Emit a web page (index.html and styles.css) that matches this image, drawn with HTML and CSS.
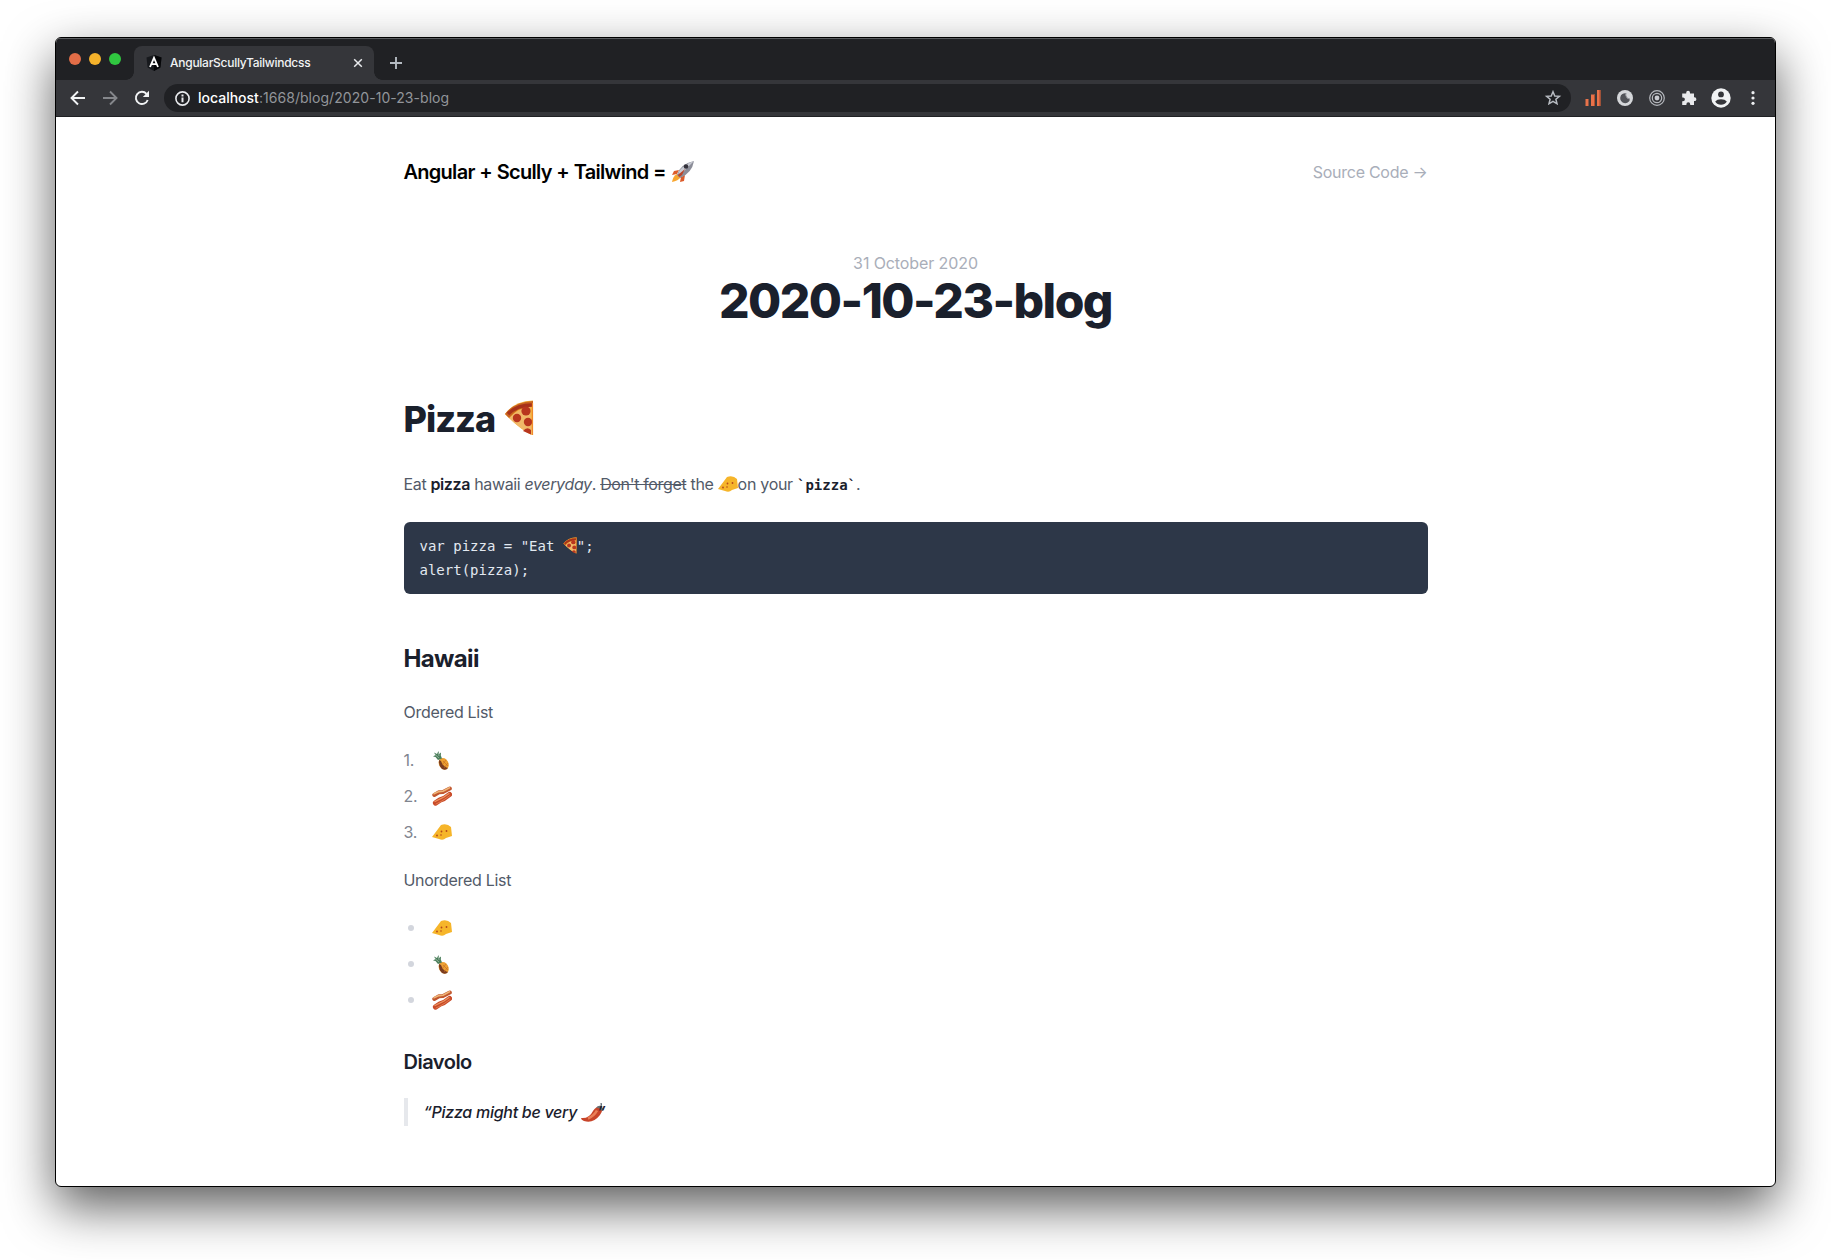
FILE: index.html
```html
<!DOCTYPE html>
<html lang="en">
<head>
<meta charset="utf-8">
<title>AngularScullyTailwindcss</title>
<link rel="stylesheet" href="styles.css">
</head>
<body>
<svg class="sprite" aria-hidden="true">
  <symbol id="pizza" viewBox="0 0 30 36">
    <path d="M1 14Q10 1 29 .5L28 35Q18 31 1 14Z" fill="#f5b13c"/>
    <path d="M5 18Q12 10 26 6L28 34Q16 29 5 18Z" fill="#f0b868"/>
    <path d="M1 14Q10 2 29 1V6Q14 7 5 18Z" fill="#c9651f"/>
    <path d="M4 14Q13 5 28 5" fill="none" stroke="#a8321a" stroke-width="3.500"/>
    <circle cx="13" cy="18" r="4.2" fill="#b8361e"/><circle cx="22" cy="11" r="4.6" fill="#b8361e"/><circle cx="24" cy="22" r="4.2" fill="#b8361e"/><path d="M19 31q4-5 8-1v4.500z" fill="#b8361e"/>
    <path d="M28.500 3V35" stroke="#ef8a2b" stroke-width="1.200"/>
  </symbol>
  <symbol id="cheese" viewBox="0 0 20 16">
    <path d="M0 13L9 1Q15-1 19 3L20 12L14 14Q11 17 7 15Z" fill="#f6b52a"/>
    <circle cx="9.500" cy="7.500" r=".9" fill="#b5481a"/><circle cx="14.500" cy="7" r=".9" fill="#b5481a"/><circle cx="5" cy="11.500" r=".9" fill="#b5481a"/><circle cx="9" cy="11" r=".8" fill="#b5481a"/>
  </symbol>
  <symbol id="pineapple" viewBox="0 0 16 19">
    <ellipse cx="10.700" cy="12.800" rx="4.700" ry="6.200" transform="rotate(-28 10.700 12.800)" fill="#eda033"/>
    <path d="M6.200 9Q5 14 9 18Q13 20 15 17Q10 16 8 10Z" fill="#7a3c20"/>
    <path d="M10 10l5 5M13 9l-4 5M15 12l-4 5" stroke="#c46a20" stroke-width=".6"/>
    <path d="M5 9L2.500 6L0 5.500L2.500 4L1 1.500L4 3L5.500 0L6 3L8 1.500L7.800 4.500L9 7.500Z" fill="#4c7f5c"/>
    <path d="M2 3.500L6 7M5.500 2L6 5" stroke="#b9cfc0" stroke-width=".6"/>
  </symbol>
  <symbol id="bacon" viewBox="0 0 20 20">
    <g fill="none" stroke-linecap="round" stroke-linejoin="round">
      <path d="M2.300 9L7 6.300L11 6L17.800 2.500" stroke="#c0562e" stroke-width="4"/>
      <path d="M2 7.800L7 5.600L11 5.200L17.500 1.800" stroke="#eeb375" stroke-width="1.600"/>
      <path d="M3.500 17L8 14L12 12.500L17.500 8.500" stroke="#c94a28" stroke-width="5.200"/>
      <path d="M3 15.500L8 13L12 11L17 7.500" stroke="#eb9560" stroke-width="1.300"/>
      <path d="M4 18L9 15.500L13 13L18 9.500" stroke="#e58a5a" stroke-width=".8"/>
    </g>
  </symbol>
  <symbol id="rocket" viewBox="0 0 22 21">
    <path d="M7 9L2 10L0 14L5 13ZM13 14L12 20L8 21L9 16Z" fill="#dc5b2a"/>
    <path d="M5 13Q1 15 0 21Q6 20 9 16Z" fill="#f8a62e"/>
    <path d="M5 14Q8 3 22 0Q20 12 8 17Z" fill="#8b8d98"/>
    <path d="M6 13Q9 4 22 0L11 11Z" fill="#c9cbd3"/>
    <circle cx="14" cy="5.500" r="2.300" fill="#34323b"/>
    <path d="M6 14L13 8L10 14L7 16Z" fill="#bd4428"/>
  </symbol>
  <symbol id="chili" viewBox="0 0 24 19">
    <path d="M0 15Q8 16 12 8Q16 2 20 4Q23 6 19 12Q12 21 3 18Q0 17 0 15Z" fill="#c8452a"/>
    <path d="M7 15.500Q13 13 16 7.500" stroke="#e98058" stroke-width="2.600" fill="none"/>
    <path d="M15 5Q18 1 21 4T21 8Q18 4 15 5Z" fill="#65717a"/>
    <path d="M19 4Q21 3 20 0" stroke="#65717a" stroke-width="1.400" fill="none"/>
  </symbol>
</svg>
<div class="window">
  <div class="tabstrip">
    <div class="lights"><i class="red"></i><i class="amber"></i><i class="green"></i></div>
    <div class="tab">
      <svg class="favicon" viewBox="0 0 16 16"><path d="M8 0L15.500 2.600L14.400 12.400L8 16L1.600 12.400L.5 2.600Z" fill="#17191d"/><path d="M8 0L15.500 2.600L14.400 12.400L8 16Z" fill="#050608"/><path d="M4 12L8 2.800L12 12M5.600 9.200H10.400" fill="none" stroke="#fff" stroke-width="1.800"/></svg>
      <span class="tab-title">AngularScullyTailwindcss</span>
      <svg class="close" viewBox="0 0 8 8"><path d="M.2.2L7.800 7.800M7.800.2L.2 7.800" stroke="#e8eaed" stroke-width="1.500"/></svg>
    </div>
    <svg class="plus" viewBox="0 0 12 12"><path d="M6 0V12M0 6H12" stroke="#b5bbc2" stroke-width="1.900"/></svg>
  </div>
  <div class="toolbar">
    <svg class="nav" viewBox="0 0 16 16"><path d="M15 8H2M8 1.500L1.500 8L8 14.500" fill="none" stroke="#f1f3f4" stroke-width="1.900"/></svg>
    <svg class="nav" viewBox="0 0 16 16"><path d="M1 8H14M8 1.500L14.500 8L8 14.500" fill="none" stroke="#85878b" stroke-width="1.900"/></svg>
    <svg class="nav" viewBox="0 0 16 16"><path d="M13.700 10A6.100 6.100 0 1 1 12.500 3.800" fill="none" stroke="#f1f3f4" stroke-width="1.900"/><path d="M15 .8V7H8.800Z" fill="#f1f3f4"/></svg>
    <div class="omnibox">
      <svg class="info" viewBox="0 0 15 15"><circle cx="7.500" cy="7.500" r="6.600" fill="none" stroke="#e8eaed" stroke-width="1.600"/><path d="M7.500 6.500V11.300M7.500 3.500V5.400" stroke="#e8eaed" stroke-width="2"/></svg>
      <span class="url"><b>localhost</b>:1668/blog/2020-10-23-blog</span>
      <svg class="star" viewBox="0 0 16 16"><path d="M8 1.700L9.800 6L14.400 6.300L10.900 9.300L12 13.800L8 11.400L4 13.800L5.100 9.300L1.600 6.300L6.200 6Z" fill="none" stroke="#b6bac0" stroke-width="1.500"/></svg>
    </div>
    <div class="extensions">
      <svg viewBox="0 0 16 16"><path d="M.5 9h3v7h-3zM6 4.500h4V16H6zM12 0h3.500v16H12z" fill="#e8724a"/><path d="M9.500 5v11M14.900 0v16" stroke="#b34e2d" stroke-width="1"/></svg>
      <svg viewBox="0 0 16 16"><circle cx="8" cy="8" r="8" fill="#d5d7da"/><path d="M9 3.200A5 5 0 1 0 13 9.500A4.600 4.600 0 0 1 9 3.200Z" fill="#515358"/><path d="M9 3A4.500 4.500 0 0 0 13 9" fill="none" stroke="#93959a" stroke-width="1"/></svg>
      <svg viewBox="0 0 16 16"><g fill="none" stroke="#b5b8bd" stroke-width="1.200"><circle cx="8" cy="8" r="7.300"/><circle cx="8" cy="8" r="4.700"/></g><circle cx="8" cy="8" r="2.400" fill="#c8cacf"/></svg>
      <svg viewBox="0 0 16 16"><path d="M1.200 3.500H5.200V2.700a1.900 1.900 0 0 1 3.800 0v.8H13V7.300h.5a1.900 1.900 0 0 1 0 3.800H13V15H9.200V14.200a1.900 1.900 0 0 0-3.800 0V15H1.200V11.200H2a1.900 1.900 0 0 0 0-3.800H1.200Z" fill="#e9eaec"/></svg>
      <svg class="avatar" viewBox="0 0 20 20"><circle cx="10" cy="10" r="9.700" fill="#f1f3f4"/><circle cx="10" cy="6.400" r="2.900" fill="#35363a"/><path d="M4.200 13.500Q6 11.200 10 11.200T15.800 13.500Q13.800 16.700 10 16.700T4.200 13.500Z" fill="#35363a"/></svg>
      <svg class="dots" viewBox="0 0 4 14"><g fill="#eceef0"><circle cx="2" cy="1.700" r="1.600"/><circle cx="2" cy="7" r="1.600"/><circle cx="2" cy="12.300" r="1.600"/></g></svg>
    </div>
  </div>
  <main class="page">
    <header class="site-header">
      <div class="brand"><span class="brand-text">Angular + Scully + Tailwind =</span><svg class="rocket"><use href="#rocket"/></svg></div>
      <a class="source">Source Code →</a>
    </header>
    <div class="post-head">
      <time>31 October 2020</time>
      <h1><span>2020-10-23-blog</span></h1>
    </div>
    <article class="prose">
      <h1><span>Pizza</span><svg class="pizza-lg"><use href="#pizza"/></svg></h1>
      <p><span class="p1">Eat <strong>pizza</strong> hawaii <em>everyday</em>. <del>Don't forget</del> the </span><svg class="cheese"><use href="#cheese"/></svg><span class="p2">on your </span><code>`pizza`</code><span>.</span></p>
      <pre><span class="line">var pizza = "Eat <svg class="pizza-sm"><use href="#pizza"/></svg>";</span><span class="line">alert(pizza);</span></pre>
      <h2>Hawaii</h2>
      <p>Ordered List</p>
      <ol>
        <li><span>1.</span><svg class="pineapple"><use href="#pineapple"/></svg></li>
        <li><span>2.</span><svg class="bacon"><use href="#bacon"/></svg></li>
        <li><span>3.</span><svg class="cheese"><use href="#cheese"/></svg></li>
      </ol>
      <p>Unordered List</p>
      <ul>
        <li><i class="bullet"></i><svg class="cheese"><use href="#cheese"/></svg></li>
        <li><i class="bullet"></i><svg class="pineapple"><use href="#pineapple"/></svg></li>
        <li><i class="bullet"></i><svg class="bacon"><use href="#bacon"/></svg></li>
      </ul>
      <h3>Diavolo</h3>
      <blockquote><span>“Pizza might be very </span><svg class="chili"><use href="#chili"/></svg><span class="endquote">”</span></blockquote>
    </article>
  </main>
</div>
</body>
</html>
```
FILE: styles.css
```css
* { box-sizing: border-box; }
body {
  margin: 0;
  height: 1260px;
  padding: 37px 55px 0;
  overflow: hidden;
  background: #fff;
  font-family: Inter, "Liberation Sans", sans-serif;
}
svg { display: block; flex: none; overflow: visible; }
.sprite { position: absolute; width: 0; height: 0; }
h1, h2, h3, p, pre, ol, ul, blockquote { margin: 0; padding: 0; }

.window {
  width: 1721px;
  height: 1150px;
  border: 1px solid #000;
  border-radius: 6px;
  overflow: hidden;
  background: #fff;
  box-shadow: 0 20px 50px rgba(0, 0, 0, .64);
}
.tabstrip {
  height: 42px;
  display: flex;
  background: #202124;
  border-top: 1px solid #5b5d60;
  padding-left: 13px;
}
.lights { display: flex; gap: 8px; padding-top: 14px; }
.lights i { width: 12px; height: 12px; border-radius: 50%; }
.red { background: #e26d47; }
.amber { background: #f5b22b; }
.green { background: #30c740; }
.tab {
  position: relative;
  width: 240px;
  height: 34px;
  margin: 7px 0 0 13px;
  padding: 0 12px;
  display: flex;
  align-items: center;
  background: #35363a;
  border-radius: 8px 8px 0 0;
}
.tab::before, .tab::after {
  content: "";
  position: absolute;
  bottom: 0;
  width: 8px;
  height: 8px;
}
.tab::before { left: -8px; background: radial-gradient(circle at 0 0, transparent 7.500px, #35363a 8px); }
.tab::after { right: -8px; background: radial-gradient(circle at 100% 0, transparent 7.500px, #35363a 8px); }
.favicon { width: 16px; height: 16px; }
.tab-title { margin: 0 0 2px 8px; font-size: 12px; font-weight: 500; color: #f1f3f4; white-space: nowrap; letter-spacing: -.26px; }
.close { width: 8px; height: 8px; margin-left: auto; }
.plus { width: 12px; height: 12px; margin: 18px 0 0 16px; }

.toolbar {
  height: 37px;
  display: flex;
  align-items: center;
  padding-left: 14px;
  background: #35363a;
  border-bottom: 1px solid #202124;
}
.nav { width: 16px; height: 16px; margin-right: 16px; }
.omnibox {
  width: 1407px;
  height: 28px;
  margin-left: -2px;
  padding: 0 10px 0 11px;
  display: flex;
  align-items: center;
  border-radius: 14px;
  background: #202124;
}
.info { width: 15px; height: 15px; }
.url { margin: 0 0 2px 8px; font-size: 14px; letter-spacing: .05px; color: #92959a; white-space: nowrap; }
.url b { font-weight: 500; color: #fff; letter-spacing: 0; }
.star { width: 16px; height: 16px; margin-left: auto; }
.extensions { display: flex; align-items: center; gap: 16px; margin-left: 14px; }
.extensions svg { width: 16px; height: 16px; }
.extensions .avatar { width: 20px; height: 20px; margin-left: -2px; }
.extensions .dots { width: 4px; height: 14px; margin-left: 4px; }

.page { width: 1024px; margin: 0 auto; }
.site-header {
  height: 110px;
  display: flex;
  justify-content: space-between;
  align-items: center;
}
.brand { display: flex; align-items: center; font-size: 20px; font-weight: 600; color: #000; white-space: nowrap; letter-spacing: -.73px; word-spacing: .4px; }
.rocket { width: 22px; height: 21px; margin: -2px 0 0 6px; }
.source { font-size: 16px; letter-spacing: -.27px; color: #a9aeb9; }
.post-head { padding-top: 22px; text-align: center; color: #1a202c; }
.post-head time { display: block; line-height: 28px; font-size: 16px; letter-spacing: -.1px; color: #a9aeb9; }
.post-head h1 { font-size: 48px; line-height: 47px; font-weight: 800; letter-spacing: -1.520px; }

.prose { margin-top: 74px; color: #525a68; font-size: 16px; line-height: 28px; }
.prose h1, .prose h2, .prose h3, strong { color: #1a202c; }
.prose h1 { display: flex; align-items: center; height: 40px; padding-top: 2px; font-size: 36px; line-height: 40px; font-weight: 800; letter-spacing: -1px; margin-bottom: 32px; }
.prose p { display: flex; align-items: center; height: 28px; white-space: pre; letter-spacing: -.3px; }
.prose .p1 { letter-spacing: -.36px; }
.p1 del { letter-spacing: -.34px; }
strong { font-weight: 600; }
code { padding-top: 2px; font: bold 14px "DejaVu Sans Mono", monospace; letter-spacing: 0; color: #1a202c; }
.prose pre {
  height: 72px;
  margin-top: 24px;
  padding: 12px 16px;
  border-radius: 6px;
  background: #2d3748;
  color: #e2e8f0;
  font: 14px/24px "DejaVu Sans Mono", monospace;
}
.line { display: block; height: 24px; }
.prose h2 { margin: 48px 0 24px; height: 32px; font-size: 24px; line-height: 34px; font-weight: 700; letter-spacing: -.65px; }
.prose h3 { margin: 32px 0 20px; height: 32px; font-size: 20px; line-height: 33px; font-weight: 600; letter-spacing: -.5px; }
ol, ul { display: flex; flex-direction: column; gap: 8px; margin: 20px 0 !important; list-style: none; }
li { height: 28px; display: flex; align-items: center; }
li > span { width: 28px; letter-spacing: -.2px; color: #80858f; }
.bullet { width: 6px; height: 6px; margin: 0 18px 0 4px; border-radius: 50%; background: #d3d6dd; }
.pizza-lg { width: 30px; height: 36px; margin: -3px 0 0 9px; }
.pizza-sm { display: inline-block; width: 16px; height: 17px; margin: 0 -1px -3px -1px; }
.cheese { width: 20px; height: 16px; }
.pineapple { width: 16px; height: 19px; margin-left: 1px; }
.bacon { width: 20px; height: 20px; }
.chili { width: 24px; height: 19px; }
blockquote {
  display: flex;
  align-items: center;
  height: 28px;
  padding-left: 16px;
  border-left: 4px solid #e6e8ec;
  color: #1a202c;
  font-style: italic;
  font-weight: 500;
  letter-spacing: -.27px;
  white-space: pre;
}
.endquote { margin-left: -8px; }
```
